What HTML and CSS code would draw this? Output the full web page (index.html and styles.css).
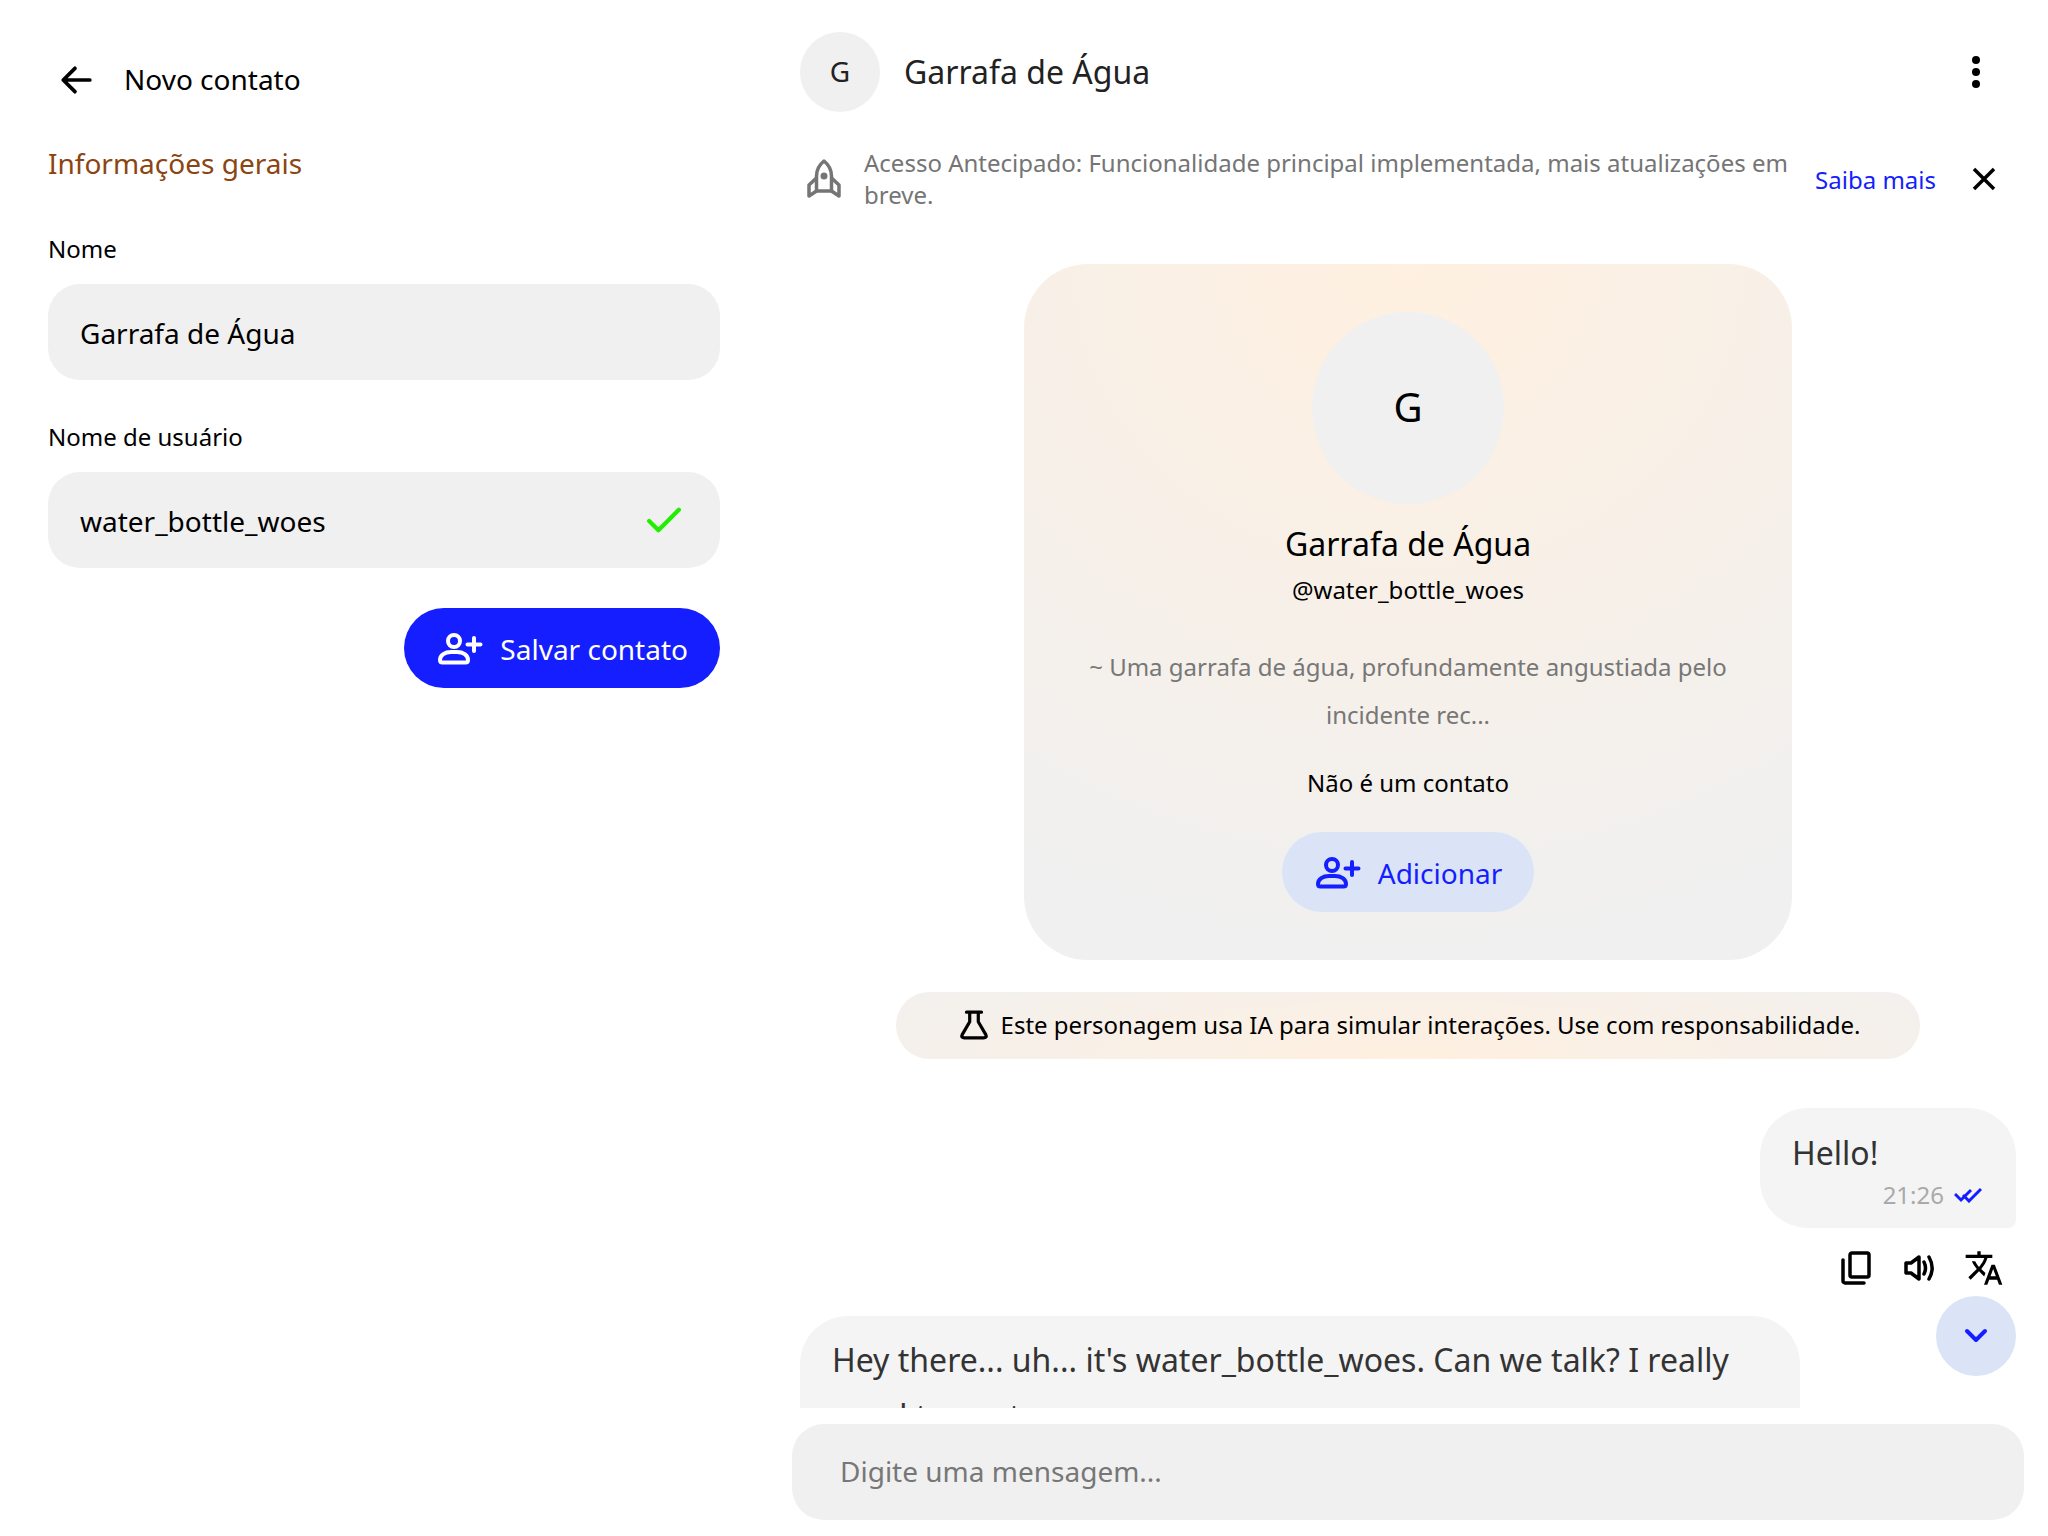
FILE: index.html
```html
<!DOCTYPE html>
<html lang="pt-BR">
<head>
  <meta charset="utf-8">
  <title>Novo contato</title>
  <link rel="stylesheet" href="styles.css">
</head>
<body>
  <div class="app">
    <section class="sidebar">
      <div class="side-header">
        <svg class="back-icon" viewBox="0 0 32 32"><path d="M29 16H4M15 5 4 16l11 11"/></svg>
        <span class="side-title">Novo contato</span>
      </div>
      <h2 class="section-title">Informações gerais</h2>

      <label class="field-label">Nome</label>
      <div class="field">Garrafa de Água</div>

      <label class="field-label">Nome de usuário</label>
      <div class="field">
        water_bottle_woes
        <svg class="check-icon" viewBox="0 0 36 28"><path d="M2 15l10 10L34 3"/></svg>
      </div>

      <div class="save-row">
        <button class="btn btn-primary">
          <svg class="add-icon" viewBox="-2 -1 48 34"><circle cx="16" cy="8" r="6"/><path d="M2 27c0-5 5-8 11-8h6c6 0 11 3 11 8 0 1.500-1 2.500-2.500 2.500h-23C3 29.500 2 28.500 2 27z"/><path d="M36 5v13M29.500 11.500h13"/></svg>
          <span>Salvar contato</span>
        </button>
      </div>
    </section>

    <section class="chat">
      <header class="chat-header">
        <div class="avatar avatar-small">G</div>
        <div class="chat-title">Garrafa de Água</div>
        <svg class="menu-icon" viewBox="0 0 8 32"><circle cx="4" cy="4" r="4"/><circle cx="4" cy="16" r="4"/><circle cx="4" cy="28" r="4"/></svg>
      </header>

      <div class="banner">
        <svg class="rocket-icon" viewBox="0 0 36 40"><path d="M18 2c5 4 7.500 9 7.500 15v15h-15V17c0-6 2.500-11 7.500-15z"/><path d="M10.500 19 3 26v11l7.500-5M25.500 19 33 26v11l-7.500-5"/><circle class="dot" cx="18" cy="17" r="3.500"/></svg>
        <p class="banner-text">Acesso Antecipado: Funcionalidade principal implementada, mais atualizações em breve.</p>
        <a class="banner-link">Saiba mais</a>
        <svg class="close-icon" viewBox="0 0 24 24"><path d="M2 2l20 20M22 2 2 22"/></svg>
      </div>

      <div class="messages">
        <div class="profile-card">
          <div class="avatar avatar-large">G</div>
          <div class="profile-name">Garrafa de Água</div>
          <div class="profile-handle">@water_bottle_woes</div>
          <p class="profile-bio">~ Uma garrafa de água, profundamente angustiada pelo incidente rec...</p>
          <div class="profile-status">Não é um contato</div>
          <button class="btn btn-soft">
            <svg class="add-icon" viewBox="-2 -1 48 34"><circle cx="16" cy="8" r="6"/><path d="M2 27c0-5 5-8 11-8h6c6 0 11 3 11 8 0 1.500-1 2.500-2.500 2.500h-23C3 29.500 2 28.500 2 27z"/><path d="M36 5v13M29.500 11.500h13"/></svg>
            <span>Adicionar</span>
          </button>
        </div>

        <div class="ai-notice">
          <svg class="flask-icon" viewBox="0 0 28 28"><path d="M7 2h14M10 2v9L3 23c-1 2 0 3 2 3h18c2 0 3-1 2-3l-7-12V2"/></svg>
          Este personagem usa IA para simular interações. Use com responsabilidade.
        </div>

        <div class="bubble bubble-out">
          <div>Hello!</div>
          <div class="bubble-meta">
            <span>21:26</span>
            <svg class="read-icon" viewBox="0 0 28 16"><path d="M1 7l6 6L17 3M9 8l6 6L27 2"/></svg>
          </div>
        </div>

        <div class="msg-actions">
          <svg viewBox="0 0 30 34"><rect x="9" y="2" width="19" height="24" rx="2"/><path d="M2 9v21c0 1 1 2 2 2h19"/></svg>
          <svg viewBox="0 0 30 34"><path d="M2 12v10h5l8 6V6l-8 6z"/><path d="M20 11c2 4 2 8 0 12M25 6c4 7 4 15 0 22"/></svg>
          <svg viewBox="0 0 24 24" class="translate-icon"><path d="M12.870 15.070l-2.540-2.510.03-.03c1.740-1.940 2.980-4.170 3.710-6.530H17V4h-7V2H8v2H1v1.990h11.170C11.500 7.920 10.440 9.750 9 11.350 8.070 10.320 7.300 9.190 6.690 8h-2c.73 1.630 1.730 3.170 2.980 4.560l-5.090 5.020L4 19l5-5 3.110 3.110.76-2.040zM18.500 10h-2L12 22h2l1.120-3h4.750L21 22h2l-4.500-12zm-2.620 7l1.620-4.330L19.120 17h-3.240z"/></svg>
        </div>

        <div class="bubble bubble-in">Hey there... uh... it's water_bottle_woes. Can we talk? I really need to vent...</div>

        <button class="scroll-down">
          <svg viewBox="0 0 24 16"><path d="M3 3l9 9 9-9"/></svg>
        </button>
      </div>

      <div class="composer">Digite uma mensagem...</div>
    </section>
  </div>
</body>
</html>
```

FILE: styles.css
```css
* {
  box-sizing: border-box;
}

body {
  margin: 0;
  font-family: "Noto Sans", sans-serif;
  background-color: #fff;
  color: #000;
}

.app {
  display: flex;
  height: 1536px;
  overflow: hidden;
}

/* left column */
.sidebar {
  width: 768px;
  padding: 48px 48px 0;
  flex-shrink: 0;
}

.side-header {
  display: flex;
  align-items: center;
  gap: 31px;
  height: 64px;
  padding-left: 11px;
  font-size: 28px;
}

.side-title {
  padding-bottom: 2px;
}

.back-icon {
  width: 34px;
  height: 34px;
  fill: none;
  stroke: #000;
  stroke-width: 3.500;
  stroke-linecap: round;
  stroke-linejoin: round;
}

.section-title {
  margin: 31px 0 0;
  font-size: 28px;
  font-weight: 400;
  line-height: 40px;
  color: #8b4513;
}

.field-label {
  display: block;
  margin-top: 49px;
  font-size: 24px;
  line-height: 33px;
}

.field + .field-label {
  margin-top: 40px;
}

.field {
  display: flex;
  align-items: center;
  justify-content: space-between;
  height: 96px;
  margin-top: 19px;
  padding: 2px 39px 0 32px;
  border-radius: 32px;
  background-color: #f0f0f0;
  font-size: 28px;
}

.check-icon {
  width: 34px;
  height: 26px;
  margin-top: -2px;
  fill: none;
  stroke: #20f000;
  stroke-width: 4.500;
  stroke-linecap: round;
  stroke-linejoin: round;
}

.save-row {
  display: flex;
  justify-content: flex-end;
  margin-top: 40px;
}

/* buttons */
.btn {
  display: inline-flex;
  align-items: center;
  gap: 16px;
  height: 80px;
  padding: 0 32px;
  border: none;
  border-radius: 40px;
  font-family: inherit;
  font-size: 28px;
}

.btn span {
  padding-top: 2px;
}

.btn-primary {
  background-color: #141efe;
  color: #fff;
}

.btn-soft {
  background-color: #dbe3f6;
  color: #141efe;
}

.add-icon {
  width: 48px;
  height: 34px;
  margin-top: 2px;
  fill: none;
  stroke: currentColor;
  stroke-width: 4;
  stroke-linecap: round;
  stroke-linejoin: round;
}

/* chat column */
.chat {
  flex: 1;
  min-width: 0;
  display: flex;
  flex-direction: column;
  padding-top: 32px;
}

.chat-header {
  display: flex;
  align-items: center;
  padding: 0 32px;
}

.avatar {
  display: flex;
  align-items: center;
  justify-content: center;
  border-radius: 50%;
  background-color: #f0f0f0;
  flex-shrink: 0;
}

.avatar-small {
  width: 80px;
  height: 80px;
  padding-bottom: 2px;
  font-size: 28px;
  color: #222;
}

.avatar-large {
  width: 192px;
  height: 192px;
  padding-bottom: 3px;
  font-size: 40px;
}

.chat-title {
  flex: 1;
  margin-left: 24px;
  padding-bottom: 2px;
  font-size: 32px;
  color: #222;
}

.menu-icon {
  width: 8px;
  height: 32px;
  margin-right: 36px;
  fill: #000;
}

.banner {
  display: flex;
  align-items: center;
  margin-top: 35px;
  padding: 0 32px 0 38px;
}

.rocket-icon {
  width: 36px;
  height: 40px;
  flex-shrink: 0;
  fill: none;
  stroke: #757575;
  stroke-width: 3.500;
  stroke-linejoin: round;
}

.rocket-icon .dot {
  fill: #757575;
  stroke: none;
}

.banner-text {
  flex: 1;
  margin: 0 0 0 22px;
  font-size: 24px;
  line-height: 32px;
  color: #757575;
}

.banner-link {
  margin-left: 13px;
  font-size: 24px;
  color: #141efe;
}

.close-icon {
  width: 24px;
  height: 24px;
  margin-left: 36px;
  margin-right: 20px;
  fill: none;
  stroke: #000;
  stroke-width: 3.500;
}

.messages {
  position: relative;
  flex: 1;
  min-height: 0;
  margin-top: 53px;
  padding: 0 32px;
  overflow: hidden;
}

.profile-card {
  display: flex;
  flex-direction: column;
  align-items: center;
  width: 768px;
  height: 696px;
  margin: 0 auto;
  padding: 48px 48px 0;
  border-radius: 64px;
  background: radial-gradient(ellipse 100% 100% at 50% 0, #fff0e0, #f0f0f0);
  text-align: center;
}

.profile-name {
  margin-top: 18px;
  font-size: 32px;
  line-height: 44px;
}

.profile-handle {
  margin-top: 7px;
  font-size: 24px;
  line-height: 33px;
}

.profile-bio {
  margin: 37px 0 0;
  font-size: 24px;
  line-height: 48px;
  color: #777;
}

.profile-status {
  margin-top: 27px;
  font-size: 24px;
  line-height: 33px;
}

.profile-card .btn {
  margin-top: 33px;
  flex-shrink: 0;
}

.ai-notice {
  display: flex;
  align-items: center;
  justify-content: center;
  gap: 12px;
  width: 1024px;
  height: 67px;
  margin: 32px auto 0;
  padding: 0 0 2px 3px;
  border-radius: 34px;
  background: radial-gradient(ellipse 70% 200% at 50% 100%, #fff0e0, #f0f0f0);
  font-size: 24px;
}

.flask-icon {
  width: 30px;
  height: 30px;
  fill: none;
  stroke: #000;
  stroke-width: 3;
  stroke-linecap: round;
  stroke-linejoin: round;
}

.bubble {
  border-radius: 48px;
  background-color: #f4f4f4;
  font-size: 32px;
  line-height: 56px;
  color: #333;
  padding: 16px 32px;
}

.bubble-out {
  width: 256px;
  height: 120px;
  margin: 49px 0 0 auto;
  padding-top: 17px;
  border-bottom-right-radius: 8px;
}

.bubble-meta {
  display: flex;
  align-items: center;
  justify-content: flex-end;
  gap: 10px;
  margin-right: 2px;
  font-size: 24px;
  line-height: 28px;
  color: #aaa;
}

.read-icon {
  width: 28px;
  height: 16px;
  fill: none;
  stroke: #141efe;
  stroke-width: 3;
}

.msg-actions {
  display: flex;
  justify-content: flex-end;
  align-items: center;
  gap: 33px;
  margin-top: 22px;
  padding-right: 12px;
  height: 36px;
}

.msg-actions svg {
  width: 30px;
  height: 34px;
  fill: none;
  stroke: #000;
  stroke-width: 3.500;
  stroke-linecap: round;
  stroke-linejoin: round;
}

.msg-actions .translate-icon {
  width: 40px;
  height: 40px;
  margin-left: -3px;
  fill: #000;
  stroke: none;
}

.bubble-in {
  width: 1000px;
  margin-top: 30px;
}

.scroll-down {
  position: absolute;
  right: 32px;
  top: 1032px;
  display: flex;
  align-items: center;
  justify-content: center;
  width: 80px;
  height: 80px;
  border: none;
  border-radius: 50%;
  background-color: #dbe3f6;
}

.scroll-down svg {
  width: 24px;
  height: 16px;
  fill: none;
  stroke: #141efe;
  stroke-width: 4;
  stroke-linecap: round;
  stroke-linejoin: round;
}

.composer {
  display: flex;
  align-items: center;
  flex-shrink: 0;
  height: 96px;
  margin: 16px 24px;
  padding: 0 48px 2px;
  border-radius: 32px;
  background-color: #f0f0f0;
  font-size: 28px;
  color: #777;
}
```
